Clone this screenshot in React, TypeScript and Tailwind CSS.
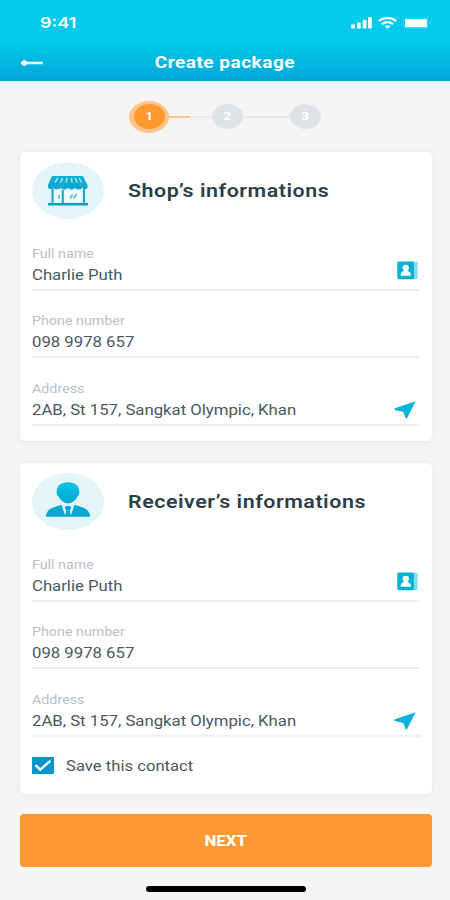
import clsx from 'clsx';
import type { ReactNode } from 'react';

interface FieldProps {
  label: string;
  value: string;
  icon?: ReactNode;
}

interface InfoCardProps {
  title: string;
  avatar: ReactNode;
  className?: string;
  children?: ReactNode;
}

function SignalIcon() {
  return (
    <svg width="21" height="12" viewBox="0 0 21 12" fill="white">
      <rect x="0" y="7.5" width="4" height="4" rx="1" />
      <rect x="6" y="5.5" width="3.8" height="6" rx="1" />
      <rect x="11.6" y="3" width="3.8" height="8.5" rx="1" />
      <rect x="17" y="0" width="3.8" height="11.5" rx="1" />
    </svg>
  );
}

function WifiIcon() {
  return (
    <svg width="19" height="12" viewBox="0 0 19 12" fill="none" stroke="white" strokeWidth="2.2">
      <path d="M0.8 4C5.6 0 13.4 0 18.2 4" />
      <path d="M3.9 7.2C7.3 4.6 11.7 4.6 15.1 7.2" />
      <path d="M6.5 9.2C8.3 8 10.7 8 12.5 9.2L9.5 11.8Z" fill="white" stroke="none" />
    </svg>
  );
}

function BatteryIcon() {
  return (
    <svg width="29" height="12" viewBox="0 0 29 12">
      <rect x="0.5" y="0.8" width="24.5" height="10.4" rx="2.5" fill="none" stroke="white" strokeOpacity="0.15" />
      <rect x="2" y="2" width="22" height="8.2" rx="1" fill="white" />
      <path d="M26.4 4.3V7.7C28.2 7.1 28.2 4.9 26.4 4.3Z" fill="white" fillOpacity="0.35" />
    </svg>
  );
}

function BackIcon() {
  return (
    <svg width="24" height="10" viewBox="0 0 24 10" fill="white">
      <path d="M0.5 5L3.2 2.3Q4.6 1.5 5.8 2.6L7 3.8H22.5Q23.4 5 22.5 6.2H7L5.8 7.4Q4.6 8.5 3.2 7.7Z" />
    </svg>
  );
}

function ShopIcon() {
  return (
    <svg width="42" height="31" viewBox="0 0 42 31">
      <defs>
        <linearGradient id="shop" x1="0" y1="0" x2="0" y2="1">
          <stop offset="0" stopColor="#0cb2d6" />
          <stop offset="1" stopColor="#12a5cf" />
        </linearGradient>
      </defs>
      <path d="M6 12H36V28H6Z" fill="#d3eff8" />
      <path d="M5 1H36L40.5 10V12.5C39.5 14.5 37 14.5 35.5 12.8C33 15 30 15 28 12.8C25.5 15 23 15 20.8 12.8C18.5 15 16 15 13.7 12.8C11.5 15 8.5 15 6.3 12.8C4.5 14.5 2 14.5 1 12.5V10Z" fill="url(#shop)" />
      <path d="M11 3L8 7.5M15.5 3L13.5 7.5M20 3L19 7.5M24.5 3L25 7.5M28.5 3L30 7.5M32 3L34.5 7.5" stroke="#a9e1ef" strokeWidth="1.5" />
      <path d="M5.5 13V29M37 13V29M15.8 15V28" stroke="#1aa7d1" strokeWidth="2" />
      <path d="M17.5 16.5Q21 13.5 24.5 16.5Q28.5 13.5 34.5 16.5V27H17.5Z" fill="#f8fdff" />
      <path d="M7.5 17L10.5 14L14 17V27.5H7.5Z" fill="#f8fdff" />
      <path d="M12 20V24M23 23.5L25.5 19.5M26.5 23.5L29.5 19" stroke="#4cbddb" strokeWidth="1.6" />
      <path d="M1 29.3H41" stroke="#129fcc" strokeWidth="2.4" />
    </svg>
  );
}

function PersonIcon() {
  return (
    <svg width="46" height="36" viewBox="0 0 46 36">
      <defs>
        <linearGradient id="person" x1="0" y1="0" x2="0" y2="1">
          <stop offset="0" stopColor="#00c2e1" />
          <stop offset="1" stopColor="#05a9d4" />
        </linearGradient>
      </defs>
      <path d="M23 0.3C29.6 0.3 34.3 4 34.3 9.3C34.7 11.6 33.9 13.1 32.6 14.2C30.8 18 27 21.3 23 21.3C19 21.3 15.2 18 13.4 14.2C12.1 13.1 11.3 11.6 11.7 9.3C11.7 4 16.4 0.3 23 0.3Z" fill="url(#person)" />
      <path d="M0.8 34.8C1.2 29.8 3.8 26.8 9 25.3L16.5 22.8L20.6 34.8ZM45.2 34.8C44.8 29.8 42.2 26.8 37 25.3L29.5 22.8L25.4 34.8Z" fill="#08a6d2" />
      <path d="M20.8 24H25.2L26.3 25.8L24.8 28.2L26 34.8H20L21.2 28.2L19.7 25.8Z" fill="#08a6d2" />
    </svg>
  );
}

function ContactIcon() {
  return (
    <svg width="21" height="19" viewBox="0 0 21 19">
      <path d="M15 0.8H19.6Q20.6 0.8 20.6 1.8V17Q20.6 18 19.6 18H15Z" fill="#84dbeb" />
      <rect x="0.3" y="0.5" width="16.6" height="17.8" rx="1.5" fill="#04b1d5" />
      <ellipse cx="8.8" cy="6.7" rx="3.2" ry="2.9" fill="white" />
      <path d="M3.8 14.8V13.3C3.8 11.3 5.8 10.2 7.2 10V8.5H10.4V10C11.8 10.2 13.8 11.3 13.8 13.3V14.8Z" fill="white" />
    </svg>
  );
}

function LocationIcon() {
  return (
    <svg width="22" height="18" viewBox="0 0 22 18">
      <path d="M21.6 0.3L13.2 16.9Q12.1 18.2 11.4 16.8L9.6 11.7Q9.3 11 8.4 10.8L0.9 8.9Q-0.3 8 0.9 7.2Z" fill="#04b3d9" />
    </svg>
  );
}

function CheckIcon() {
  return (
    <svg width="18" height="13" viewBox="0 0 18 13" fill="none" stroke="white" strokeWidth="2.4">
      <path d="M1.5 6.2L6.2 10.7L16.3 1.8" />
    </svg>
  );
}

function Step({ number, active }: { number: number; active?: boolean }) {
  return (
    <div
      className={clsx(
        'flex shrink-0 items-center justify-center',
        active && 'h-8 w-10 rounded-[50%] bg-[#ffc48a]'
      )}
    >
      <div
        className={clsx(
          'flex h-[25px] w-[31px] items-center justify-center rounded-[50%] pt-px text-[11px] font-bold text-white',
          active ? 'bg-[#ff982f]' : 'bg-[#dfe3e8]'
        )}
      >
        <span className="scale-x-[1.25]">{number}</span>
      </div>
    </div>
  );
}

function Field({ label, value, icon }: FieldProps) {
  return (
    <div className="flex h-[67.5px] items-end justify-between border-b-2 border-[#eceff1] pb-[3px]">
      <div className="whitespace-nowrap">
        <div className="w-max origin-left scale-x-[1.19] text-xs leading-5 text-[#b9c0c6]">{label}</div>
        <div className="w-max origin-left scale-x-[1.195] text-sm leading-[22px] text-[#4a585f]">{value}</div>
      </div>
      {icon}
    </div>
  );
}

function InfoCard({ title, avatar, className, children }: InfoCardProps) {
  return (
    <section className={clsx('rounded-[5px] bg-white px-3 pt-2.5 shadow-[0_1px_6px_rgba(0,0,0,0.07)]', className)}>
      <div className="mb-1 flex h-[57px] items-center">
        <div className="flex h-[57px] w-[72px] items-center justify-center rounded-[50%] bg-[#e4f5fa]">
          {avatar}
        </div>
        <h2 className="ml-6 w-max origin-left scale-x-[1.19] text-lg font-semibold tracking-[0.45px] whitespace-nowrap text-[#2c3e48]">
          {title}
        </h2>
      </div>
      <Field
        label="Full name"
        value="Charlie Puth"
        icon={<div className="mr-[2px] mb-[6px]"><ContactIcon /></div>}
      />
      <Field label="Phone number" value="098 9978 657" />
      <Field
        label="Address"
        value="2AB, St 157, Sangkat Olympic, Khan"
        icon={<div className="mr-[4px] mb-[2px]"><LocationIcon /></div>}
      />
      {children}
    </section>
  );
}

function App() {
  return (
    <div className="flex h-[900px] w-[450px] flex-col overflow-hidden bg-[#f5f5f6] font-['Roboto','Liberation_Sans',sans-serif]">
      <header className="h-[81px] shrink-0 bg-linear-to-b from-[#02caea] from-50% to-[#00a6d7] text-white">
        <div className="flex h-[45px] items-center justify-between pr-[18px] pl-10">
          <span className="origin-left scale-x-[1.2] pt-px font-['Inter'] text-[15px] font-semibold">9:41</span>
          <div className="flex items-center gap-[6px]">
            <SignalIcon />
            <WifiIcon />
            <BatteryIcon />
          </div>
        </div>
        <div className="grid h-[35px] grid-cols-[1fr_auto_1fr] items-center pl-5">
          <BackIcon />
          <h1 className="mr-5 scale-x-[1.19] pt-px text-base font-bold tracking-[0.4px]">Create package</h1>
        </div>
      </header>

      <div className="flex h-[71px] shrink-0 items-center justify-center">
        <Step number={1} active />
        <div className="flex h-[2px] w-[43px] bg-[#e9ebee]">
          <div className="w-[21px] bg-[#ffc48a]" />
        </div>
        <Step number={2} />
        <div className="h-[2px] w-[47px] bg-[#e6e9ec]" />
        <Step number={3} />
      </div>

      <main className="flex flex-col pr-[18px] pl-5">
        <InfoCard title="Shop’s informations" avatar={<ShopIcon />} className="h-[289px]" />
        <InfoCard
          title="Receiver’s informations"
          avatar={<div className="mb-[3px]"><PersonIcon /></div>}
          className="mt-[22px] h-[331px]"
        >
          <label className="flex h-[58px] items-center">
            <span className="flex h-[17px] w-[22px] items-center justify-center rounded-[1px] bg-[#0795cb]">
              <CheckIcon />
            </span>
            <span className="ml-3 origin-left scale-x-[1.19] text-sm text-[#4a585f]">Save this contact</span>
          </label>
        </InfoCard>
        <button className="mt-5 h-[53px] rounded-[4px] bg-[#ff9830] text-sm font-extrabold text-white">
          <span className="inline-block scale-x-[1.2]">NEXT</span>
        </button>
      </main>

      <div className="mt-[19px] ml-[146px] h-[6px] w-40 rounded-full bg-black" />
    </div>
  );
}

export default App;
